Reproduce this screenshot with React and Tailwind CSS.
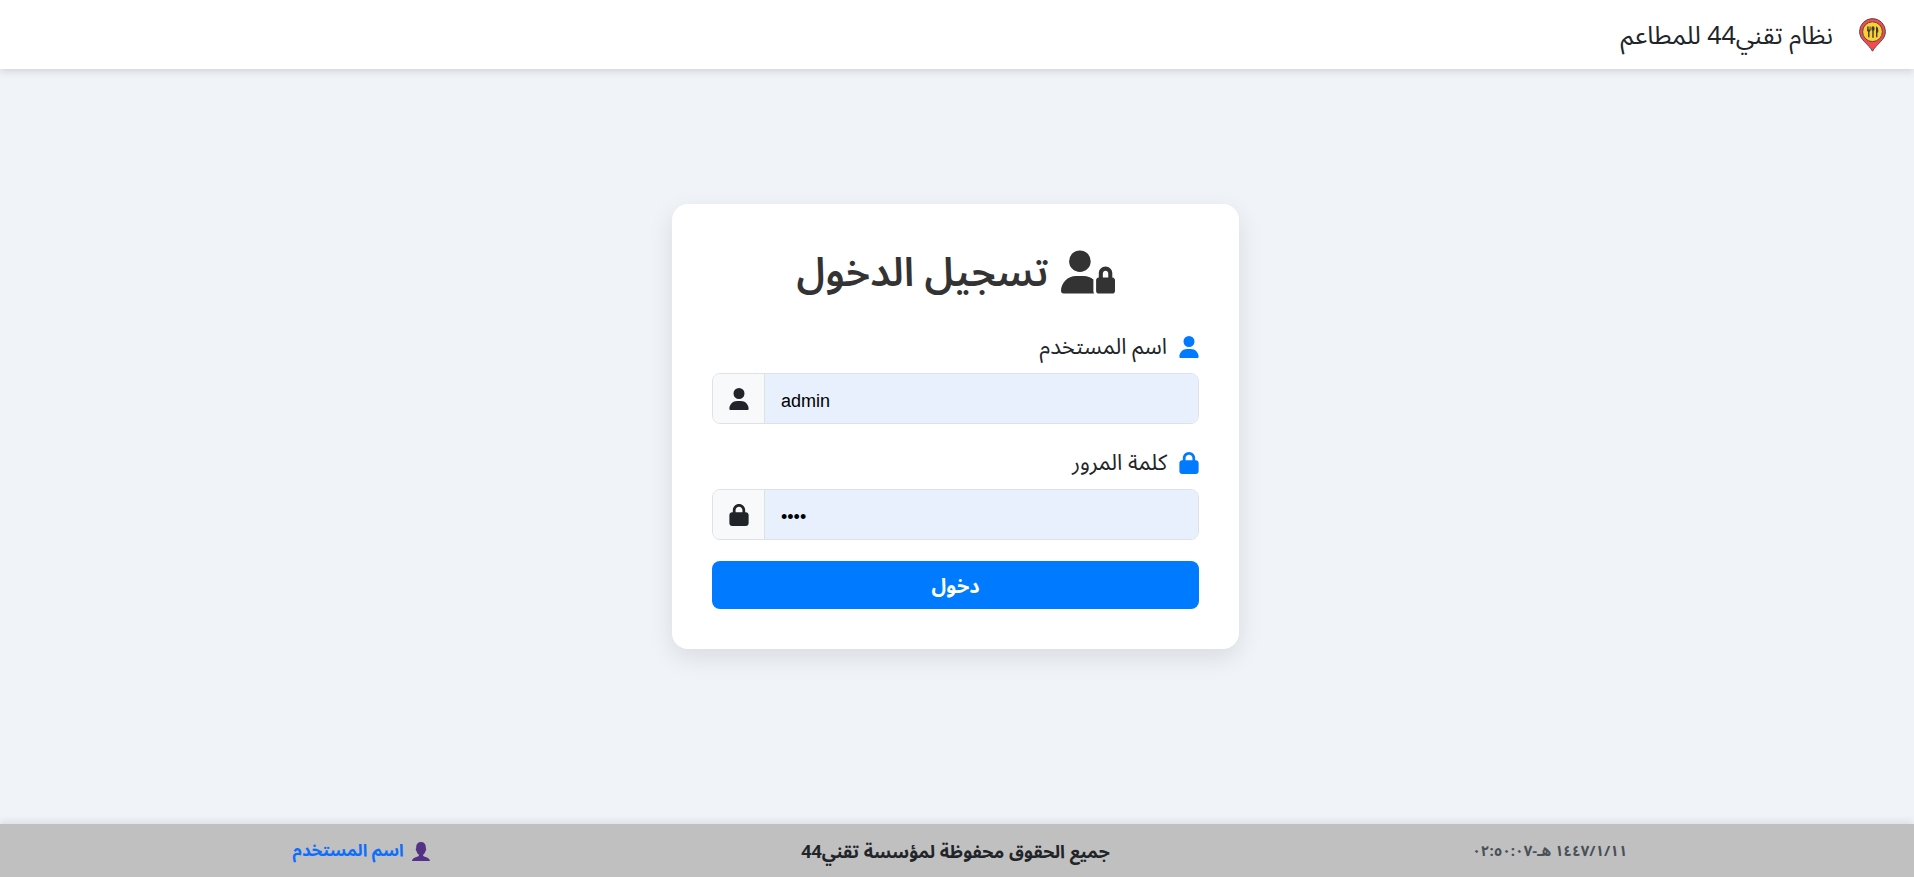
import React, { useState } from "react";
import { FaLock, FaUser, FaUserLock } from "react-icons/fa6";

const FIELDS = [
  { name: "username", label: "اسم المستخدم", type: "text", autoComplete: "username", Icon: FaUser },
  { name: "password", label: "كلمة المرور", type: "password", autoComplete: "current-password", Icon: FaLock },
];

function BrandPin() {
  return (
    <svg viewBox="0 0 27 34" className="h-[34px] w-[27px]" aria-hidden>
      <path
        d="M13.5 33.2C11.5 29.6 8.6 27 5.6 23.8 2.4 20.6.6 17.6.6 13.5A12.9 12.9 0 0 1 26.4 13.5C26.4 17.6 24.6 20.6 21.4 23.8 18.4 27 15.5 29.6 13.5 33.2Z"
        fill="#f9494f"
        stroke="#4a4a4f"
        strokeWidth="1"
      />
      <circle cx="13.5" cy="13.7" r="9.9" fill="#fdd032" stroke="#4a4a4f" strokeWidth="1" />
      {/* fork, spoon, knife */}
      <g fill="#3f3a33">
        <path d="M8 8.500h.8v3h.6v-3h.8v3h.6v-3h.8v3.400c0 1-.5 1.500-1.100 1.700v5.600H9.100v-5.600C8.500 13.400 8 12.900 8 11.900Z" />
        <ellipse cx="14" cy="10.7" rx="1.600" ry="2.400" />
        <path d="M13.300 12.500h1.400v7.200h-1.400Z" />
        <path d="M17 8.300c1.800.6 2.500 2.300 2.300 6.200h-.9v4.700H17Z" />
      </g>
    </svg>
  );
}

function Silhouette() {
  return (
    <svg viewBox="0 0 18 19" className="h-[19px] w-[18px]" aria-hidden>
      <path
        d="M9 0C5.900 0 4.200 2 4.200 5v1.300c-.6.100-.7 2.200.3 2.600.4 1.800 1.300 3 2.300 3.700v1.500C5.500 15.200.500 15.200 0 19h18c-.5-3.800-5.500-3.800-6.800-4.900v-1.500c1-.7 1.900-1.900 2.300-3.700 1-.4.9-2.500.3-2.600V5C13.800 2 12.100 0 9 0Z"
        fill="#533285"
      />
    </svg>
  );
}

function Field({ field, value, onChange }) {
  const { name, label, type, autoComplete, Icon } = field;
  return (
    <div className="mb-[21px]">
      <label htmlFor={name} className="mb-2 flex h-9 items-center gap-3 text-[22px] text-[#212529]">
        <Icon className="h-[22px] w-5 text-[#007bff]" aria-hidden />
        {label}
      </label>
      <div className="flex h-[51px] overflow-hidden rounded-lg border border-[#dee2e6]">
        <input
          id={name}
          name={name}
          type={type}
          dir="ltr"
          autoComplete={autoComplete}
          value={value}
          onChange={onChange}
          className="min-w-0 flex-1 bg-[#e8f0fe] px-4 pt-1 font-[family-name:'Liberation_Sans',sans-serif] text-lg text-black outline-none"
        />
        <span className="flex w-[52px] items-center justify-center border-r border-[#dee2e6] bg-[#f8f9fa] text-[#212529]">
          <Icon className="h-[22px] w-5" aria-hidden />
        </span>
      </div>
    </div>
  );
}

export default function App() {
  const [form, setForm] = useState({ username: "admin", password: "1234" });

  const update = (e) => setForm({ ...form, [e.target.name]: e.target.value });

  return (
    <div
      dir="rtl"
      lang="ar"
      className="flex min-h-screen flex-col bg-[#f0f4f8] font-[family-name:'Noto_Sans_Arabic','Noto_Sans',sans-serif]"
    >
      <header className="flex h-[69px] items-center gap-[26px] bg-white px-7 shadow-[0_2px_8px_rgba(0,0,0,0.15)]">
        <BrandPin />
        <a href="#" className="pt-1 text-[25px] text-[#212529]">
          نظام تقني44 للمطاعم
        </a>
      </header>

      <main className="flex flex-1 items-center justify-center pt-4 pr-[19px] pb-14 pl-4">
        <form
          onSubmit={(e) => e.preventDefault()}
          className="w-full max-w-[567px] rounded-2xl bg-white p-10 shadow-[0_8px_24px_rgba(0,0,0,0.1)]"
        >
          <h1 className="mb-[29px] flex h-14 items-center justify-center gap-3 text-[40px] font-semibold text-[#333]">
            <FaUserLock className="h-[44px] w-[54px]" aria-hidden />
            <span className="pt-1">تسجيل الدخول</span>
          </h1>
          {FIELDS.map((field) => (
            <Field key={field.name} field={field} value={form[field.name]} onChange={update} />
          ))}
          <button type="submit" className="h-12 w-full rounded-lg bg-[#007bff] pt-1 text-xl font-bold text-white">
            دخول
          </button>
        </form>
      </main>

      <footer className="grid h-[53px] grid-cols-3 items-center bg-[#c0c0c0] pt-0.5 pr-[67px] pl-16 text-center text-lg font-bold text-[#212529] shadow-[0_-2px_8px_rgba(0,0,0,0.1)]">
        <span className="text-[15px] text-[#495057]">١٤٤٧/١/١١ هـ-٠٢:٥٠:٠٧</span>
        <span>جميع الحقوق محفوظة لمؤسسة تقني44</span>
        <a href="#" className="flex items-center justify-center gap-2 text-[17px] text-[#0d6efd]">
          <Silhouette />
          اسم المستخدم
        </a>
      </footer>
    </div>
  );
}
